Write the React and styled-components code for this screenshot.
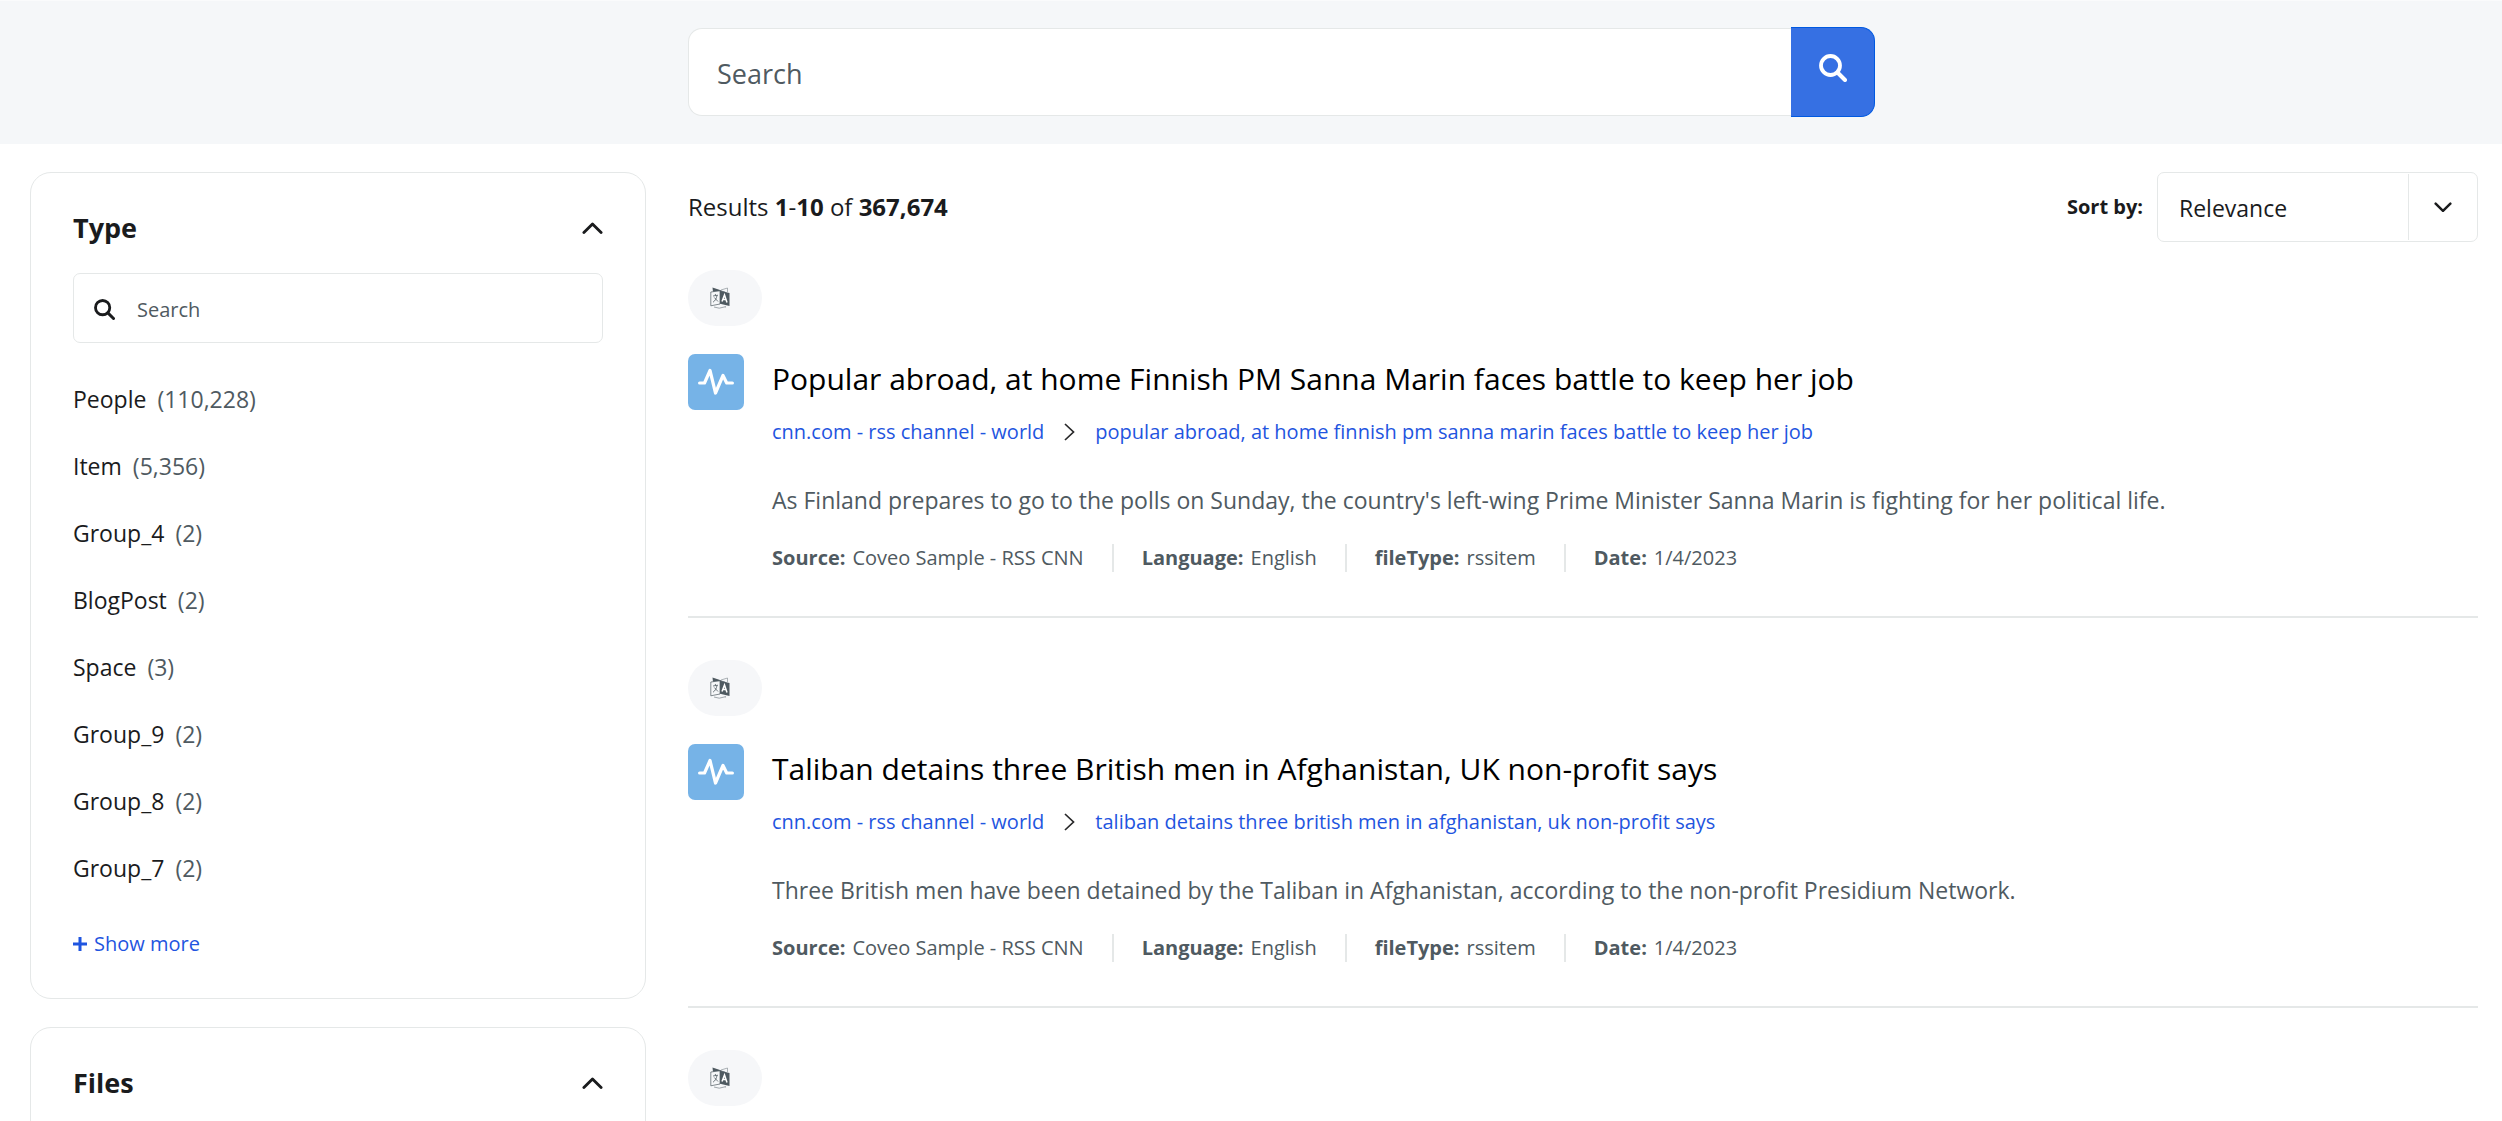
import React, { useState } from 'react';
import styled, { createGlobalStyle } from 'styled-components';

const facetValues = [
  { name: 'People', count: '110,228' },
  { name: 'Item', count: '5,356' },
  { name: 'Group_4', count: '2' },
  { name: 'BlogPost', count: '2' },
  { name: 'Space', count: '3' },
  { name: 'Group_9', count: '2' },
  { name: 'Group_8', count: '2' },
  { name: 'Group_7', count: '2' },
];

const results = [
  {
    id: 1,
    title: 'Popular abroad, at home Finnish PM Sanna Marin faces battle to keep her job',
    excerpt: "As Finland prepares to go to the polls on Sunday, the country's left-wing Prime Minister Sanna Marin is fighting for her political life.",
  },
  {
    id: 2,
    title: 'Taliban detains three British men in Afghanistan, UK non-profit says',
    excerpt: 'Three British men have been detained by the Taliban in Afghanistan, according to the non-profit Presidium Network.',
  },
  { id: 3 },
];

const meta = [
  ['Source', 'Coveo Sample - RSS CNN'],
  ['Language', 'English'],
  ['fileType', 'rssitem'],
  ['Date', '1/4/2023'],
];

const GlobalStyle = createGlobalStyle`
  * {
    box-sizing: border-box;
  }
  body {
    margin: 0;
    background: #fff;
    color: #1a1b1d;
    font-family: "Open Sans", "Noto Sans", sans-serif;
    font-size: 23px;
    line-height: 32px;
  }
  input, button, select {
    font-family: inherit;
    color: inherit;
  }
  input::placeholder {
    color: #4f5a61;
    opacity: 1;
  }
`;

const SearchIcon = ({ size }) => (
  <svg width={size} height={size} viewBox="0 0 28 28" fill="none" stroke="currentColor" strokeLinecap="round">
    <circle cx="11.5" cy="11.5" r="9.5" strokeWidth="3.8" />
    <path d="M18.5 18.5 L26 26" strokeWidth="4" />
  </svg>
);

const Chevron = ({ width, up }) => (
  <svg width={width} viewBox="0 0 22 13" fill="none" stroke="currentColor" strokeWidth="3" strokeLinecap="round" strokeLinejoin="round">
    <path d={up ? 'M2 11 L11 2 L20 11' : 'M2 2 L11 11 L20 2'} />
  </svg>
);

const TranslateIcon = () => (
  <svg width="20" height="22" viewBox="0 0 20 22" fill="none">
    <path d="M2.5 0.5 L10 3 L17 5.5 L10 4.2 L3 5 Z" fill="#4f5a61" />
    <path d="M11 3 L17.5 1 V5" stroke="#8a9298" strokeWidth="0.7" />
    <path d="M0.8 5 L10 3.8 V17 L0.8 18.8 Z" fill="#f6f7f9" stroke="#4f5a61" strokeWidth="0.7" />
    <path d="M10 3.8 L19.5 6 V19 L10 16.8 Z" fill="#4f5a61" />
    <path d="M12 14.5 L14.5 8 L17 15.5 M13 12.6 H16" stroke="#fff" strokeWidth="1.5" />
    <path d="M3 9 L8 8.2 M5.4 7 V8.5 M7 8.5 C6.5 11.5 5 14 3 15.2 M4.3 10.5 L8 14.5" stroke="#4f5a61" strokeWidth="0.8" />
    <path d="M4 20 Q9 22.5 15 19.8 M15.4 19 V20.6" stroke="#8a9298" strokeWidth="0.8" />
  </svg>
);

const PulseIcon = () => (
  <svg width="36" height="28" viewBox="0 0 36 28" fill="none" stroke="#fff" strokeWidth="3.2" strokeLinecap="round" strokeLinejoin="round">
    <path d="M1.6 15 H6.5 L12 2.5 L17.5 25 L25 7.5 L28.7 15 H34.4" />
  </svg>
);

const PlusIcon = () => (
  <svg width="14" height="14" viewBox="0 0 14 14" stroke="currentColor" strokeWidth="3">
    <path d="M0 7 H14 M7 0 V14" />
  </svg>
);

function Facet({ title, searchable, values = [] }) {
  const [open, setOpen] = useState(true);

  return (
    <Card>
      <FacetHeader type="button" aria-expanded={open} onClick={() => setOpen(!open)}>
        {title}
        <Chevron width={21} up={open} />
      </FacetHeader>
      {open && searchable && (
        <FacetSearch>
          <SearchIcon size={21} />
          <input type="text" placeholder="Search" aria-label={`Search ${title}`} />
        </FacetSearch>
      )}
      {open && values.length > 0 && (
        <>
          <FacetList>
            {values.map(({ name, count }) => (
              <li key={name}>
                <FacetValue type="button">
                  {name}
                  <Count>({count})</Count>
                </FacetValue>
              </li>
            ))}
          </FacetList>
          <ShowMore type="button">
            <PlusIcon />
            Show more
          </ShowMore>
        </>
      )}
    </Card>
  );
}

function Result({ title, excerpt }) {
  return (
    <ResultItem>
      <Badge>
        <TranslateIcon />
      </Badge>
      {title && (
        <ResultRow>
          <TypeIcon>
            <PulseIcon />
          </TypeIcon>
          <div>
            <Title href="#">{title}</Title>
            <Breadcrumb>
              <a href="#">cnn.com - rss channel - world</a>
              <svg width="11" height="18" viewBox="0 0 11 18" fill="none" stroke="#282829" strokeWidth="1.7">
                <path d="M1 1 L9.5 9 L1 17" />
              </svg>
              <a href="#">{title.toLowerCase()}</a>
            </Breadcrumb>
            <Excerpt>{excerpt}</Excerpt>
            <MetaList>
              {meta.map(([label, value]) => (
                <Meta key={label}>
                  <b>{label}:</b>
                  {value}
                </Meta>
              ))}
            </MetaList>
          </div>
        </ResultRow>
      )}
    </ResultItem>
  );
}

export default function App() {
  return (
    <Page>
      <GlobalStyle />
      <Header>
        <SearchBox role="search">
          <SearchInput type="text" placeholder="Search" aria-label="Search" />
          <SearchButton type="button" aria-label="Submit search">
            <SearchIcon size={28} />
          </SearchButton>
        </SearchBox>
      </Header>
      <Layout>
        <Sidebar>
          <Facet title="Type" searchable values={facetValues} />
          <Facet title="Files" />
        </Sidebar>
        <main>
          <StatusBar>
            <span>
              Results <b>1</b>-<b>10</b> of <b>367,674</b>
            </span>
            <Sort>
              <SortLabel htmlFor="sort">Sort by:</SortLabel>
              <SelectBox>
                <Select id="sort" defaultValue="relevance">
                  <option value="relevance">Relevance</option>
                </Select>
                <SelectArrow>
                  <Chevron width={18} />
                </SelectArrow>
              </SelectBox>
            </Sort>
          </StatusBar>
          {results.map(result => (
            <Result key={result.id} {...result} />
          ))}
        </main>
      </Layout>
    </Page>
  );
}

const Page = styled.div`
  height: 100vh;
  overflow: hidden;
`;

const Header = styled.header`
  display: grid;
  grid-template-columns: 688fr 1187fr 627fr;
  padding: 26px 0 27px;
  border-top: 1px solid #fafbfc;
  background: #f5f7f9;
`;

const SearchBox = styled.form`
  display: flex;
  align-items: center;
  grid-column: 2;
`;

const SearchInput = styled.input`
  flex: 1;
  min-width: 0;
  height: 88px;
  padding: 2px 28px 0;
  border: 1px solid #e5e8e8;
  border-right: 0;
  border-radius: 14px 0 0 14px;
  background: #fff;
  font-size: 27px;
  outline: none;
`;

const SearchButton = styled.button`
  width: 84px;
  height: 90px;
  padding: 0 0 8px;
  border: 1px solid #0059e1;
  border-left: 0;
  border-radius: 0 14px 14px 0;
  background: #3670e3;
  color: #fff;

  svg {
    vertical-align: middle;
  }
`;

const Layout = styled.div`
  display: grid;
  grid-template-columns: 616fr 1790fr;
  gap: 42px;
  padding: 28px 24px 0 30px;
`;

const Sidebar = styled.aside`
  display: flex;
  flex-direction: column;
  gap: 28px;
`;

const Card = styled.section`
  display: flex;
  flex-direction: column;
  padding: 35px 42px 38px;
  border: 1px solid #e5e8e8;
  border-radius: 21px;
`;

const FacetHeader = styled.button`
  display: flex;
  align-items: center;
  justify-content: space-between;
  padding: 0;
  border: 0;
  background: none;
  font-size: 27px;
  font-weight: 700;
  line-height: 40px;
`;

const FacetSearch = styled.label`
  display: flex;
  align-items: center;
  gap: 22px;
  height: 70px;
  margin-top: 25px;
  padding: 2px 20px 0;
  border: 1px solid #e5e8e8;
  border-radius: 7px;

  input {
    flex: 1;
    min-width: 0;
    padding: 0;
    border: 0;
    background: none;
    font-size: 20px;
    outline: none;
  }
`;

const FacetList = styled.ul`
  margin: 22px 0 0;
  padding: 0;
  list-style: none;
`;

const FacetValue = styled.button`
  display: flex;
  align-items: center;
  gap: 11px;
  height: 67px;
  padding: 0;
  border: 0;
  background: none;
  font-size: 23px;
`;

const Count = styled.span`
  color: #4f5a61;
`;

const ShowMore = styled.button`
  display: flex;
  align-items: center;
  gap: 7px;
  margin-top: 27px;
  padding: 0;
  border: 0;
  background: none;
  color: #1f55e0;
  font-size: 20px;
  line-height: 32px;
`;

const StatusBar = styled.div`
  display: flex;
  align-items: center;
  justify-content: space-between;
  font-size: 24px;
`;

const Sort = styled.div`
  display: flex;
  align-items: center;
  gap: 14px;
`;

const SortLabel = styled.label`
  font-size: 20px;
  font-weight: 700;
`;

const SelectBox = styled.div`
  display: flex;
  width: 321px;
  height: 70px;
  padding: 1px 0;
  border: 1px solid #e5e8e8;
  border-radius: 7px;
`;

const Select = styled.select`
  flex: 1;
  padding: 2px 21px 0;
  border: 0;
  border-right: 1px solid #e5e8e8;
  background: none;
  font-size: 23px;
  appearance: none;
  outline: none;
`;

const SelectArrow = styled.span`
  display: flex;
  align-items: center;
  justify-content: center;
  width: 68px;
`;

const ResultItem = styled.article`
  padding: 28px 0 44px;
  border-bottom: 2px solid #e5e8e8;

  & + & {
    padding-top: 42px;
  }
`;

const Badge = styled.div`
  display: flex;
  align-items: center;
  width: 74px;
  height: 56px;
  padding-left: 22px;
  border-radius: 28px;
  background: #f6f7f9;
`;

const ResultRow = styled.div`
  display: flex;
  gap: 28px;
  margin-top: 28px;
`;

const TypeIcon = styled.div`
  display: flex;
  flex: none;
  align-items: center;
  justify-content: center;
  width: 56px;
  height: 56px;
  border-radius: 7px;
  background: #76b3e7;
`;

const Title = styled.a`
  display: block;
  color: #000;
  font-size: 30px;
  line-height: 50px;
  text-decoration: none;
`;

const Breadcrumb = styled.nav`
  display: flex;
  align-items: center;
  gap: 20px;
  margin-top: 12px;
  font-size: 20px;

  a {
    color: #1f55e0;
    text-decoration: none;
  }
`;

const Excerpt = styled.p`
  margin: 36px 0 0;
  color: #4f5a61;
`;

const MetaList = styled.div`
  display: flex;
  margin-top: 28px;
  color: #4f5a61;
  font-size: 20px;
  line-height: 28px;
`;

const Meta = styled.span`
  display: flex;
  gap: 7px;

  & + & {
    margin-left: 28px;
    padding-left: 28px;
    border-left: 2px solid #e5e8e8;
  }
`;
